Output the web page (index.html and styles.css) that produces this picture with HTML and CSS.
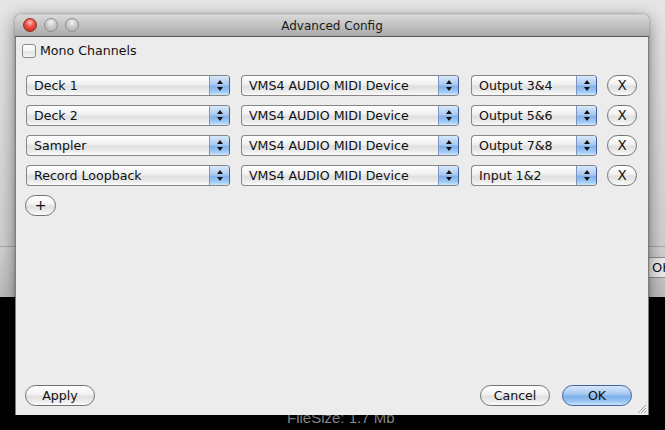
FILE: index.html
```html
<!DOCTYPE html>
<html lang="en">
<head>
	<meta charset="UTF-8">
	<title>Advanced Config</title>
	<link rel="stylesheet" href="styles.css">
</head>
<body>
<div class="desk">
	<div class="desk-top"></div>
	<div class="desk-bar"><span class="bar-field">OK</span></div>
	<div class="desk-foot"><span class="filesize">FileSize: 1.7 Mb</span></div>

	<div class="window">
		<div class="titlebar">
			<div class="lights">
				<span class="light red"></span>
				<span class="light"></span>
				<span class="light"></span>
			</div>
			<div class="title">Advanced Config</div>
		</div>
		<div class="content">
			<label class="check"><span class="box"></span>Mono Channels</label>
			<div class="rows">
				<div class="row">
					<div class="popup col1"><span class="label">Deck 1</span><span class="arrows"></span></div>
					<div class="popup col2"><span class="label">VMS4 AUDIO MIDI Device</span><span class="arrows"></span></div>
					<div class="popup col3"><span class="label">Output 3&amp;4</span><span class="arrows"></span></div>
					<button class="pill remove">X</button>
				</div>
				<div class="row">
					<div class="popup col1"><span class="label">Deck 2</span><span class="arrows"></span></div>
					<div class="popup col2"><span class="label">VMS4 AUDIO MIDI Device</span><span class="arrows"></span></div>
					<div class="popup col3"><span class="label">Output 5&amp;6</span><span class="arrows"></span></div>
					<button class="pill remove">X</button>
				</div>
				<div class="row">
					<div class="popup col1"><span class="label">Sampler</span><span class="arrows"></span></div>
					<div class="popup col2"><span class="label">VMS4 AUDIO MIDI Device</span><span class="arrows"></span></div>
					<div class="popup col3"><span class="label">Output 7&amp;8</span><span class="arrows"></span></div>
					<button class="pill remove">X</button>
				</div>
				<div class="row">
					<div class="popup col1"><span class="label">Record Loopback</span><span class="arrows"></span></div>
					<div class="popup col2"><span class="label">VMS4 AUDIO MIDI Device</span><span class="arrows"></span></div>
					<div class="popup col3"><span class="label">Input 1&amp;2</span><span class="arrows"></span></div>
					<button class="pill remove">X</button>
				</div>
			</div>
			<button class="pill add">+</button>
			<div class="actions">
				<button class="pill wide">Apply</button>
				<div class="actions-right">
					<button class="pill wide">Cancel</button>
					<button class="pill wide ok">OK</button>
				</div>
			</div>
		</div>
		<svg class="grip" width="11" height="11" viewBox="0 0 11 11">
			<path d="M10 2 L2 10 M10 5 L5 10 M10 8 L8 10" stroke="#9a9a9a" stroke-width="1"/>
			<path d="M10 3 L3 10 M10 6 L6 10 M10 9 L9 10" stroke="#f6f6f6" stroke-width="1"/>
		</svg>
	</div>
</div>
</body>
</html>
```

FILE: styles.css
```css
*{margin:0;padding:0;box-sizing:border-box;}
body{width:665px;height:430px;overflow:hidden;background:#000;font-family:"DejaVu Sans",sans-serif;font-size:12.6px;color:#111;}
button{font-family:inherit;font-size:inherit;color:inherit;}

.desk{position:relative;width:665px;height:430px;display:flex;flex-direction:column;}
.desk-top{height:246px;background:linear-gradient(#e6e6e6,#d0d0d0);}
.desk-bar{height:51px;background:linear-gradient(#d2d2d2,#bdbdbd);border-top:1px solid #a6a6a6;display:flex;justify-content:flex-end;padding-top:10px;}
.bar-field{width:16px;height:21px;background:#ececec;border-top:1px solid #8c8c8c;border-bottom:1px solid #8c8c8c;padding-left:3px;line-height:19px;font-size:13px;white-space:nowrap;overflow:hidden;}
.desk-foot{flex:1;background:#000;padding:112px 0 0 287px;}
.filesize{font-family:"Liberation Sans",sans-serif;font-size:15px;line-height:17px;color:#a9a9a9;}

/* the dialog window sits on the desktop */
.window{position:absolute;left:15px;top:14px;width:634px;height:401px;background:#ececec;border-left:1px solid #7d7d7d;border-right:1px solid #7d7d7d;border-radius:5px 5px 0 0;box-shadow:0 5px 18px rgba(0,0,0,.45),0 0 3px rgba(0,0,0,.25);display:flex;flex-direction:column;}
.titlebar{position:relative;height:23px;background:linear-gradient(#d9d9d9,#a9a9a9);border-top:1px solid #c8c8c8;border-bottom:1px solid #555;border-radius:5px 5px 0 0;margin:0 -1px;}
.lights{display:flex;gap:7px;padding:3px 0 0 8px;}
.light{width:14px;height:14px;border-radius:50%;border:1px solid #8e8e8e;background:radial-gradient(circle at 50% 30%,#f2f2f2 0%,#cbcbcb 45%,#a9a9a9 100%);}
.light.red{border-color:#9c2a22;background:radial-gradient(circle at 50% 30%,#ffc8c0 0%,#ee5248 40%,#c0221a 100%);}
.title{position:absolute;left:0;right:0;top:1px;text-align:center;line-height:21px;font-size:12px;color:#1a1a1a;}

.content{flex:1;display:flex;flex-direction:column;padding:7px 16px 9px 6px;}
.check{display:flex;align-items:center;gap:4px;height:14px;line-height:14px;}
.box{width:14px;height:14px;border:1px solid #8a8a8a;border-radius:3px;background:linear-gradient(#fff,#f2f2f2 50%,#e2e2e2 55%,#f6f6f6);}

.rows{margin:17px 0 0 4px;display:flex;flex-direction:column;gap:9px;}
.row{display:flex;align-items:center;height:21px;}
.row > *{flex-shrink:0;}
.popup{height:21px;display:flex;border:1px solid #868686;border-right-color:#3f5f9c;border-radius:4px;background:linear-gradient(#fefefe 0%,#f2f2f2 40%,#e0e0e0 55%,#ebebeb 80%,#fbfbfb 100%);overflow:hidden;}
.col1{width:204px;margin-right:11px;}
.col2{width:218px;margin-right:12px;}
.col3{width:126px;margin-right:10px;}
.label{flex:1;padding-left:7px;line-height:19px;white-space:nowrap;}
.arrows{width:20px;border-left:1px solid #7b96c4;background:linear-gradient(#d8e8fa 0%,#abcaf0 45%,#84b1ea 55%,#a2ccf6 85%,#d2e8fc 100%);display:flex;flex-direction:column;align-items:center;justify-content:center;gap:3px;}
.arrows::before{content:"";border-left:3px solid transparent;border-right:3px solid transparent;border-bottom:4px solid #111;}
.arrows::after{content:"";border-left:3px solid transparent;border-right:3px solid transparent;border-top:4px solid #111;}

.pill{height:21px;border:1px solid #727272;border-radius:11px;background:linear-gradient(#ffffff 0%,#f4f4f4 40%,#e1e1e1 55%,#ececec 80%,#fdfdfd 100%);line-height:19px;text-align:center;}
.remove{width:30px;font-size:13.5px;}
.add{width:31px;margin:9px 0 0 3px;font-size:14px;}
.wide{width:70px;}
.ok{border-color:#41639f;background:linear-gradient(#d6e7fa 0%,#a9cbf1 40%,#7fb0ea 55%,#96c5f3 80%,#cce5fb 100%);}
.actions{margin-top:auto;padding-left:3px;display:flex;justify-content:space-between;}
.actions-right{display:flex;gap:12px;}

.grip{position:absolute;right:1px;bottom:1px;}
```
